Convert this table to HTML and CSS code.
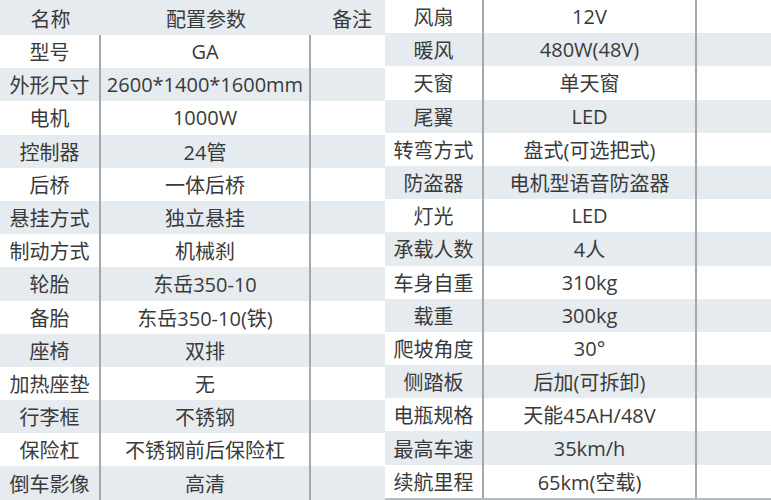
FILE: index.html
```html
<!DOCTYPE html>
<html lang="zh">
<head>
<meta charset="utf-8">
<link rel="stylesheet" href="styles.css">
</head>
<body>
<div class="page">
  <div class="tbl left">
    <div class="row head"><div class="c k">名称</div><div class="c v">配置参数</div><div class="c n">备注</div></div>
    <div class="row"><div class="c k">型号</div><div class="c v">GA</div><div class="c n"></div></div>
    <div class="row alt"><div class="c k">外形尺寸</div><div class="c v">2600*1400*1600mm</div><div class="c n"></div></div>
    <div class="row"><div class="c k">电机</div><div class="c v">1000W</div><div class="c n"></div></div>
    <div class="row alt"><div class="c k">控制器</div><div class="c v">24管</div><div class="c n"></div></div>
    <div class="row"><div class="c k">后桥</div><div class="c v">一体后桥</div><div class="c n"></div></div>
    <div class="row alt"><div class="c k">悬挂方式</div><div class="c v">独立悬挂</div><div class="c n"></div></div>
    <div class="row"><div class="c k">制动方式</div><div class="c v">机械刹</div><div class="c n"></div></div>
    <div class="row alt"><div class="c k">轮胎</div><div class="c v">东岳350-10</div><div class="c n"></div></div>
    <div class="row"><div class="c k">备胎</div><div class="c v">东岳350-10(铁)</div><div class="c n"></div></div>
    <div class="row alt"><div class="c k">座椅</div><div class="c v">双排</div><div class="c n"></div></div>
    <div class="row"><div class="c k">加热座垫</div><div class="c v">无</div><div class="c n"></div></div>
    <div class="row alt"><div class="c k">行李框</div><div class="c v">不锈钢</div><div class="c n"></div></div>
    <div class="row"><div class="c k">保险杠</div><div class="c v">不锈钢前后保险杠</div><div class="c n"></div></div>
    <div class="row alt"><div class="c k">倒车影像</div><div class="c v">高清</div><div class="c n"></div></div>
  </div>
  <div class="tbl right">
    <div class="row"><div class="c k">风扇</div><div class="c v">12V</div><div class="c n"></div></div>
    <div class="row alt"><div class="c k">暖风</div><div class="c v">480W(48V)</div><div class="c n"></div></div>
    <div class="row"><div class="c k">天窗</div><div class="c v">单天窗</div><div class="c n"></div></div>
    <div class="row alt"><div class="c k">尾翼</div><div class="c v">LED</div><div class="c n"></div></div>
    <div class="row"><div class="c k">转弯方式</div><div class="c v">盘式(可选把式)</div><div class="c n"></div></div>
    <div class="row alt"><div class="c k">防盗器</div><div class="c v">电机型语音防盗器</div><div class="c n"></div></div>
    <div class="row"><div class="c k">灯光</div><div class="c v">LED</div><div class="c n"></div></div>
    <div class="row alt"><div class="c k">承载人数</div><div class="c v">4人</div><div class="c n"></div></div>
    <div class="row"><div class="c k">车身自重</div><div class="c v">310kg</div><div class="c n"></div></div>
    <div class="row alt"><div class="c k">载重</div><div class="c v">300kg</div><div class="c n"></div></div>
    <div class="row"><div class="c k">爬坡角度</div><div class="c v">30°</div><div class="c n"></div></div>
    <div class="row alt"><div class="c k">侧踏板</div><div class="c v">后加(可拆卸)</div><div class="c n"></div></div>
    <div class="row"><div class="c k">电瓶规格</div><div class="c v">天能45AH/48V</div><div class="c n"></div></div>
    <div class="row alt"><div class="c k">最高车速</div><div class="c v">35km/h</div><div class="c n"></div></div>
    <div class="row"><div class="c k">续航里程</div><div class="c v">65km(空载)</div><div class="c n"></div></div>
  </div>
</div>
</body>
</html>
```
FILE: styles.css
```css
html, body {
  margin: 0;
  padding: 0;
  background: #ffffff;
}
.page {
  width: 771px;
  height: 500px;
  display: flex;
  overflow: hidden;
  font-family: "Open Sans", "Noto Sans CJK SC", sans-serif;
  font-size: 20px;
  color: #3a3a3a;
}
.tbl {
  display: flex;
  flex-direction: column;
  flex: none;
}
.left {
  width: 385px;
  background: #e6ebef;
}
.right {
  width: 386px;
  height: 500px;
  box-sizing: border-box;
  border-bottom: 2px solid #b8bcc0;
  overflow: hidden;
}
.row {
  display: grid;
  height: 33.2px;
  flex: none;
  background: #ffffff;
}
.row.alt, .row.head {
  background: #e6ebef;
}
.left .row {
  grid-template-columns: 101px 210px 74px;
}
.left .row.head {
  height: 35px;
  padding-top: 2px;
  box-sizing: border-box;
}
.right .row {
  grid-template-columns: 99px 213px 74px;
}
.c {
  display: flex;
  align-items: center;
  justify-content: center;
  white-space: nowrap;
  box-sizing: border-box;
  min-width: 0;
}
.c.k, .c.v {
  border-right: 2px solid #a4a8ac;
}
.head .c.k, .head .c.v {
  border-right: none;
}
.head .c.n {
  padding-left: 8px;
}
```
